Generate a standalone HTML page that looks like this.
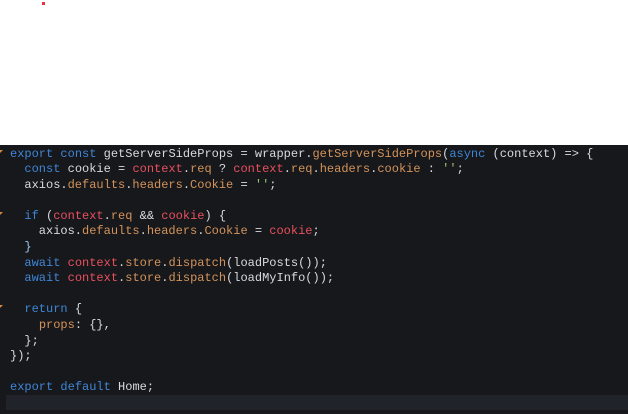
<!DOCTYPE html>
<html><head><style>
body{margin:0;width:628px;height:414px;background:#fff;position:relative;overflow:hidden}
.dot{position:absolute;left:42px;top:2px;width:3px;height:3px;background:#e8323c}
.ed{position:absolute;left:0;top:145px;width:628px;height:269px;background:#17181c}
.hl{position:absolute;left:6px;top:250px;width:622px;height:15px;background:#21232b}
pre{position:absolute;left:10px;top:1.5px;margin:0;font-family:"Liberation Mono",monospace;font-size:12px;line-height:15.6px;color:#d7dae0}
.k{color:#3f86d6}.r{color:#e8505e}.o{color:#d3935a}.g{color:#98c379}.b{color:#9cc4ee}
.f{position:absolute;left:0;width:0;height:0;border-left:3px solid #d38a3a;border-bottom:3px solid transparent}
</style></head><body>
<div class="dot"></div>
<div class="ed">
<div class="hl"></div>
<div class="f" style="top:5px"></div><div class="f" style="top:67px"></div><div class="f" style="top:160px"></div>
<pre><span class="k">export</span> <span class="k">const</span> getServerSideProps = wrapper.<span class="o">getServerSideProps</span>(<span class="k">async</span> (context) =&gt; {
  <span class="k">const</span> cookie = <span class="r">context</span>.<span class="o">req</span> ? <span class="r">context</span>.<span class="o">req</span>.<span class="o">headers</span>.<span class="o">cookie</span> : <span class="g">''</span>;
  axios.<span class="o">defaults</span>.<span class="o">headers</span>.<span class="o">Cookie</span> = <span class="g">''</span>;

  <span class="k">if</span> (<span class="r">context</span>.<span class="o">req</span> &amp;&amp; <span class="r">cookie</span>) {
    axios.<span class="o">defaults</span>.<span class="o">headers</span>.<span class="o">Cookie</span> = <span class="r">cookie</span>;
  <span class="b">}</span>
  <span class="k">await</span> <span class="r">context</span>.<span class="o">store</span>.<span class="o">dispatch</span>(loadPosts());
  <span class="k">await</span> <span class="r">context</span>.<span class="o">store</span>.<span class="o">dispatch</span>(loadMyInfo());

  <span class="k">return</span> {
    <span class="o">props</span>: {},
  };
});

<span class="k">export</span> <span class="k">default</span> Home;</pre>
</div>
</body></html>
